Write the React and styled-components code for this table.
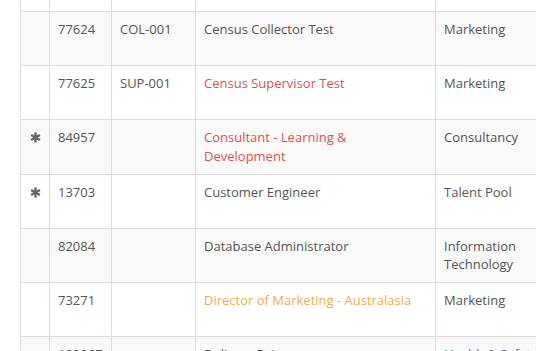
import React from "react";
import styled, { createGlobalStyle } from "styled-components";

const GlobalStyle = createGlobalStyle`
  html, body {
    margin: 0;
    padding: 0;
    background: #ffffff;
    overflow: hidden;
  }
  body {
    font-family: "Open Sans", "Liberation Sans", sans-serif;
    font-size: 13px;
    line-height: 1.42857;
    color: #555555;
  }
`;

const Page = styled.div`
  padding-left: 20px;
  width: 760px;
`;

const Table = styled.table`
  border-collapse: collapse;
  table-layout: fixed;
  width: 740px;
  margin-top: -43px;
`;

const Row = styled.tr`
  background: ${(props) => (props.striped ? "#f9f9f9" : "#ffffff")};
`;

const Cell = styled.td`
  border: 1px solid #dddddd;
  padding: 8px;
  height: 37.17px;
  vertical-align: top;
  color: ${(props) => props.color || "#555555"};
  text-align: ${(props) => (props.center ? "center" : "left")};
`;

const Star = styled.svg`
  display: inline-block;
  width: 11px;
  height: 11px;
  margin-top: 4px;
`;

function Asterisk() {
  return (
    <Star viewBox="0 0 12 12">
      <g stroke="#666666" strokeWidth="2.6" strokeLinecap="butt">
        <line x1="6" y1="0.5" x2="6" y2="11.5" />
        <line x1="1.2" y1="3.2" x2="10.8" y2="8.8" />
        <line x1="1.2" y1="8.8" x2="10.8" y2="3.2" />
      </g>
    </Star>
  );
}

const colours = {
  red: "#d9534f",
  orange: "#f0ad4e",
  blue: "#337ab7",
};

const rows = [
  { id: "", code: "", title: "", dept: "" },
  { id: "77624", code: "COL-001", title: "Census Collector Test", dept: "Marketing" },
  { id: "77625", code: "SUP-001", title: "Census Supervisor Test", tone: "red", dept: "Marketing" },
  { star: true, id: "84957", code: "", title: "Consultant - Learning & Development", tone: "red", dept: "Consultancy" },
  { star: true, id: "13703", code: "", title: "Customer Engineer", dept: "Talent Pool" },
  { id: "82084", code: "", title: "Database Administrator", dept: "Information Technology" },
  { id: "73271", code: "", title: "Director of Marketing - Australasia", tone: "orange", dept: "Marketing" },
  { id: "100067", code: "", title: "Delivery Driver", dept: "Health & Safety", deptTone: "blue" },
];

export default function App() {
  return (
    <Page>
      <GlobalStyle />
      <Table>
        <colgroup>
          <col style={{ width: 29 }} />
          <col style={{ width: 62 }} />
          <col style={{ width: 84 }} />
          <col style={{ width: 240 }} />
          <col style={{ width: 112 }} />
          <col />
        </colgroup>
        <tbody>
          {rows.map((r, i) => (
            <Row key={i} striped={i % 2 === 1}>
              <Cell center>{r.star && <Asterisk />}</Cell>
              <Cell>{r.id}</Cell>
              <Cell>{r.code}</Cell>
              <Cell color={r.tone && colours[r.tone]}>{r.title}</Cell>
              <Cell color={r.deptTone && colours[r.deptTone]}>{r.dept}</Cell>
              <Cell />
            </Row>
          ))}
        </tbody>
      </Table>
    </Page>
  );
}
